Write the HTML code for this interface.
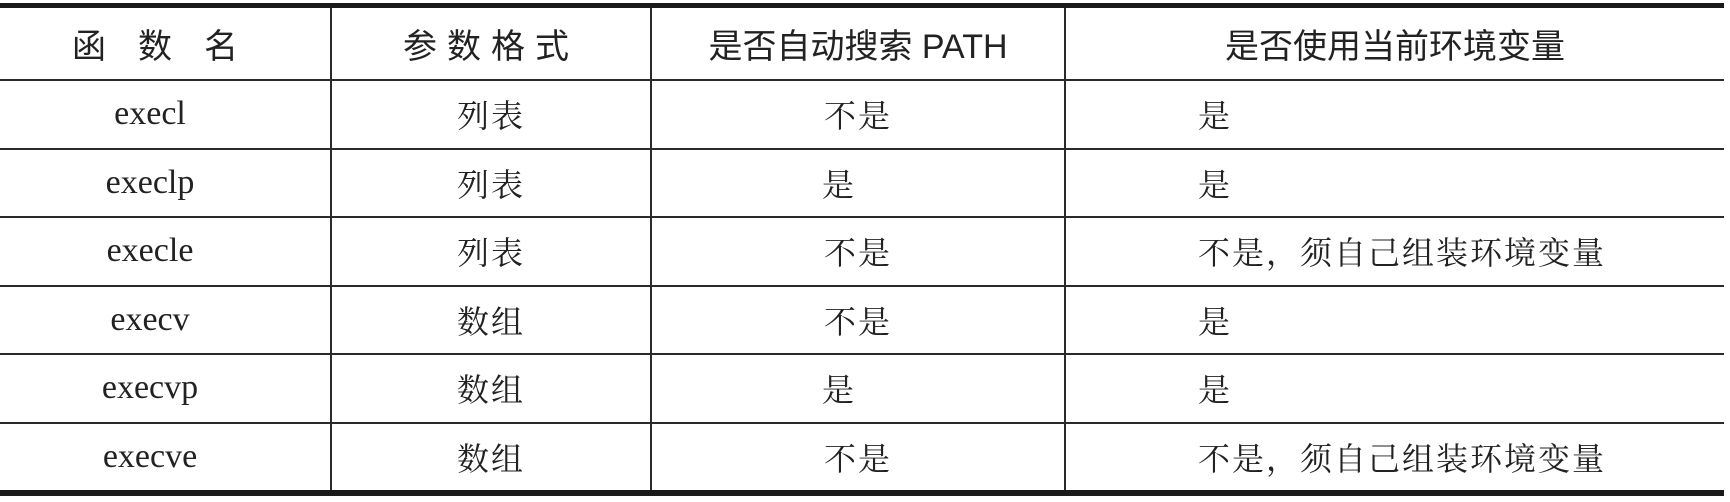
<!DOCTYPE html>
<html><head><meta charset="utf-8"><style>
html,body{margin:0;padding:0;background:#fff;width:1730px;height:502px;overflow:hidden}
table{position:absolute;left:0;top:3px;width:1724px;border-collapse:collapse;border-top:5px solid #1a1a1a;border-bottom:6px solid #1a1a1a;color:#222}
td,th{border:2px solid #2a2a2a;border-left:none;border-right:none;height:66.5px;padding:0;font-size:32px;letter-spacing:2px;font-weight:normal;font-family:"Liberation Serif","Noto Serif CJK SC",serif}
th{height:71px;font-family:"Liberation Sans","Noto Sans CJK SC",sans-serif;font-size:34px;letter-spacing:0}
td+td,th+th{border-left:2px solid #2a2a2a}
td{text-align:center}
td.l{text-align:left;padding-left:132px}
td.f{padding-right:30px;font-size:34px;letter-spacing:0}
</style></head><body>
<table>
<colgroup><col style="width:331px"><col style="width:320px"><col style="width:414px"><col></colgroup>
<tr><th style="letter-spacing:32px;padding-left:12px">函数名</th><th style="letter-spacing:10px">参数格式</th><th>是否自动搜索 PATH</th><th>是否使用当前环境变量</th></tr>
<tr><td class="f">execl</td><td>列表</td><td>不是</td><td class="l">是</td></tr>
<tr><td class="f">execlp</td><td>列表</td><td style="text-align:left;padding-left:170px">是</td><td class="l">是</td></tr>
<tr><td class="f">execle</td><td>列表</td><td>不是</td><td class="l">不是，须自己组装环境变量</td></tr>
<tr><td class="f">execv</td><td>数组</td><td>不是</td><td class="l">是</td></tr>
<tr><td class="f">execvp</td><td>数组</td><td style="text-align:left;padding-left:170px">是</td><td class="l">是</td></tr>
<tr><td class="f">execve</td><td>数组</td><td>不是</td><td class="l">不是，须自己组装环境变量</td></tr>
</table>
</body></html>
